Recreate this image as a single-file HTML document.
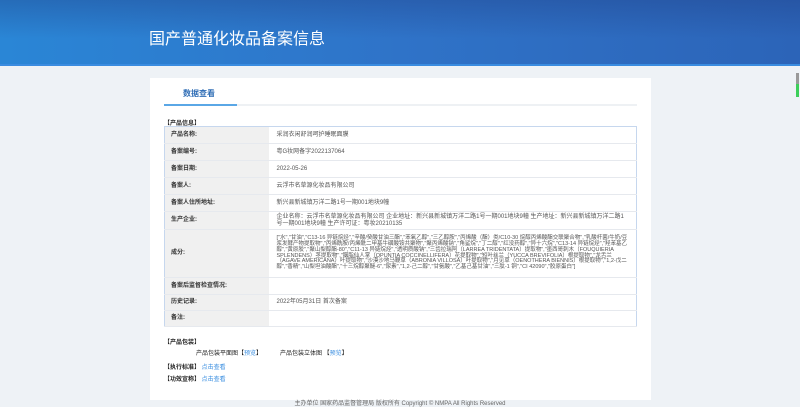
<!DOCTYPE html>
<html><head><meta charset="utf-8"><style>
*{margin:0;padding:0;box-sizing:border-box}
body{width:800px;height:405px;overflow:hidden;background:#eef2f6;font-family:"Liberation Sans","Noto Sans CJK SC",sans-serif;position:relative}
.hd{position:absolute;left:0;top:0;width:800px;height:66px;background:linear-gradient(180deg,rgba(30,60,130,0.35) 0%,rgba(30,60,130,0) 60%),linear-gradient(90deg,#2a86d6 0%,#2f73c8 50%,#2c64b8 100%);border-bottom:2px solid #3a8ce0}
.hd h1{position:absolute;left:149px;top:25px;font-size:16px;font-weight:normal;color:#fff;letter-spacing:0}
.card{position:absolute;left:150px;top:78px;width:501px;height:322px;background:#fff}
.tab{position:absolute;left:33px;top:10px;font-size:8px;font-weight:bold;color:#2f6db5}
.tabline{position:absolute;left:14px;top:26px;width:473px;height:2px;background:#eef1f4}
.tabon{position:absolute;left:14px;top:26px;width:73px;height:2px;background:#5aa7e6}
.sec{position:absolute;font-size:6px;font-weight:bold;color:#222}
table{position:absolute;left:14px;top:48px;width:473px;border:1px solid #c6d7ee;border-collapse:collapse;font-size:6px;color:#555}
td{border-bottom:1px solid #e6e9ee;padding:0 8px;vertical-align:middle;line-height:6.5px}
td.l{width:104px;background:#f0f0f0;font-weight:bold;color:#333;padding-left:6px}
.a{color:#3a8ee0}
.ft{position:absolute;left:0;top:398px;width:800px;text-align:center;font-size:6px;color:#666}
.sb{position:absolute;left:796px;top:73px;width:3px;height:24px;background:linear-gradient(#999 45%,#3ccf5a 45%)}
</style></head><body>
<div class="hd"><h1>国产普通化妆品备案信息</h1></div>
<div class="sb"></div>
<div class="card">
<div class="tab">数据查看</div>
<div class="tabline"></div><div class="tabon"></div>
<div class="sec" style="left:14px;top:40px">【产品信息】</div>
<table>
<tr style="height:17px"><td class="l">产品名称:</td><td>采润衣闲舒润呵护睡眠面膜</td></tr>
<tr style="height:17px"><td class="l">备案编号:</td><td>粤G妆网备字2022137064</td></tr>
<tr style="height:17px"><td class="l">备案日期:</td><td>2022-05-26</td></tr>
<tr style="height:17px"><td class="l">备案人:</td><td>云浮市名草源化妆品有限公司</td></tr>
<tr style="height:17px"><td class="l">备案人住所地址:</td><td>新兴县新城镇万洋二路1号一期001地块9幢</td></tr>
<tr style="height:18px"><td class="l">生产企业:</td><td>企业名称：云浮市名草源化妆品有限公司 企业地址：新兴县新城镇万洋二路1号一期001地块9幢 生产地址：新兴县新城镇万洋二路1号一期001地块9幢 生产许可证：粤妆20210135</td></tr>
<tr style="height:48px"><td class="l">成分:</td><td style="font-size:5.5px;line-height:5.8px">["水","甘油","C13-16 异链烷烃","辛酸/癸酸甘油三酯","苯氧乙醇","三乙醇胺","丙烯酸（酯）类/C10-30 烷醇丙烯酸酯交联聚合物","乳酸杆菌/牛奶/豆浆发酵产物提取物","丙烯酰胺/丙烯酰二甲基牛磺酸铵共聚物","聚丙烯酸钠","角鲨烷","丁二醇","红没药醇","异十六烷","C13-14 异链烷烃","羟苯基乙醇","黄原胶","聚山梨醇酯-80","C11-13 异链烷烃","透明质酸钠","三齿拉瑞阿（LARREA TRIDENTATA）提取物","墨西哥刺木（FOUQUIERIA SPLENDENS）茎提取物","胭脂仙人掌（OPUNTIA COCCINELLIFERA）花提取物","短叶丝兰（YUCCA BREVIFOLIA）根提取物","龙舌兰（AGAVE AMERICANA）叶提取物","沙漠沙地马鞭草（ABRONIA VILLOSA）叶提取物","月见草（OENOTHERA BIENNIS）根提取物","1,2-戊二醇","香精","山梨坦油酸酯","十三烷醇聚醚-6","尿素","1,2-己二醇","甘氨酸","乙基己基甘油","三肽-1 铜","CI 42090","胶原蛋白"]</td></tr>
<tr style="height:17px"><td class="l">备案后监督检查情况:</td><td></td></tr>
<tr style="height:16px"><td class="l">历史记录:</td><td>2022年05月31日 首次备案</td></tr>
<tr style="height:16px"><td class="l">备注:</td><td></td></tr>
</table>
<div class="sec" style="left:14px;top:259px">【产品包装】</div>
<div class="sec" style="left:46px;top:270px;font-weight:normal">产品包装平面图【<span class="a">预览</span>】</div>
<div class="sec" style="left:130px;top:270px;font-weight:normal">产品包装立体图 【<span class="a">预览</span>】</div>
<div class="sec" style="left:14px;top:284px">【执行标准】 <span class="a" style="font-weight:normal">点击查看</span></div>
<div class="sec" style="left:14px;top:296px">【功效宣称】 <span class="a" style="font-weight:normal">点击查看</span></div>
</div>
<div class="ft">主办单位 国家药品监督管理局 版权所有 Copyright © NMPA All Rights Reserved</div>
</body></html>
